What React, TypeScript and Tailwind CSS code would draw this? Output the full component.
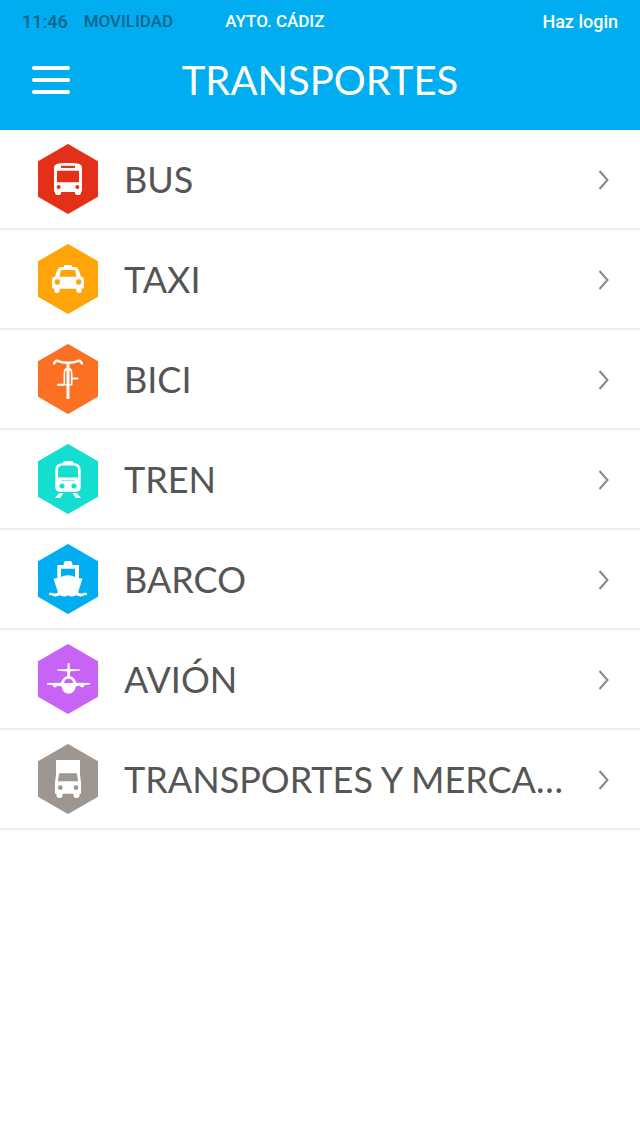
import type { ReactNode } from 'react'

type Transport = {
	label: string
	color: string
	icon: ReactNode
}

const transports: Transport[] = [
	{
		label: 'BUS',
		color: 'fill-[#e53019]',
		icon: (
			<>
				<path
					fillRule="evenodd"
					d="M16 24C16 20 19 19 30 19S44 20 44 24V46Q44 48 43 48V49Q43 51 40 51T37 49V48H23V49Q23 51 20 51T17 49V48Q16 48 16 46ZM23 21.700V24H37V21.700ZM19 26.700V38.300H41V26.700Z"
				/>
				<circle cx="20.7" cy="43" r="2" className="fill-[#e53019]" />
				<circle cx="39.3" cy="43" r="2" className="fill-[#e53019]" />
			</>
		),
	},
	{
		label: 'TAXI',
		color: 'fill-[#ffa50a]',
		icon: (
			<>
				<path
					fillRule="evenodd"
					d="M26 23V22Q26 21 27 21H33Q34 21 34 22V23H37Q39.5 23 40.5 25.5L43 32.5Q46 33 46 36.5V43Q46 44.7 43.7 44.7V47Q43.7 49 41 49T38.3 47V44.7H21.7V47Q21.7 49 19 49T16.3 47V44.7Q14 44.7 14 43V36.5Q14 33 17 32.5L19.5 25.5Q20.500 23 23 23ZM24 26Q23 26 22.7 27L21.5 32.7H38.5L37.3 27Q37 26 36 26Z"
				/>
				<circle cx="19.3" cy="38" r="2.7" className="fill-[#ffa50a]" />
				<circle cx="40.7" cy="38" r="2.7" className="fill-[#ffa50a]" />
			</>
		),
	},
	{
		label: 'BICI',
		color: 'fill-[#fc7023]',
		icon: (
			<g fill="none" stroke="white" strokeWidth="2" strokeLinecap="round">
				<path
					strokeWidth="2.5"
					d="M16 19.5C17 17 19 16 21.5 17.5C24 19 26 18.8 30 18.8S36 19 38.5 17.5C41 16 43 17 44 19.5"
				/>
				<path strokeWidth="3" strokeLinecap="butt" d="M30 18V55" />
				<path
					strokeWidth="1.6"
					d="M26.3 40.5V30C26.3 26 27.5 24.4 30 24.4S33.7 26 33.7 30V40.5M26.3 40.7H28M32 40.7H33.7"
				/>
				<path d="M20 40.7H26M34 34.5H39.5" />
			</g>
		),
	},
	{
		label: 'TREN',
		color: 'fill-[#14decf]',
		icon: (
			<>
				<path
					fillRule="evenodd"
					d="M25 19Q25 17 27 17H33.5Q35.5 17 35.5 19Q42.7 19.5 42.7 26V43Q42.7 47.7 38 47.7H22Q17.3 47.7 17.3 43V26Q17.3 19.5 25 19ZM25 21.5Q20 21.5 20 26V33.5H40V26Q40 21.5 35 21.5ZM23.500 36V36.600H36.500V36Z"
				/>
				<path d="M21.5 49H25.5L22 54H17L20.5 50ZM38.5 49H34.5L38 54H43L39.5 50Z" />
				<circle cx="24" cy="42" r="2.5" className="fill-[#14decf]" />
				<circle cx="36" cy="42" r="2.5" className="fill-[#14decf]" />
			</>
		),
	},
	{
		label: 'BARCO',
		color: 'fill-[#00adf0]',
		icon: (
			<>
				<path d="M25.7 21V19L27 17H33L34.3 19V21H41V34L44.5 34.7L40 48.5C42 49.5 44 49.7 45.5 49Q47.5 47.8 49 49.5V51.3Q47 50.5 45.5 51.7C43 53 40.5 52.5 38 51.3C35 53 32.5 53 30 51.3C27.5 53 25 53 22 51.3C19.5 52.5 17 53 14.5 51.7Q13 50.5 11 51.3V49.5Q12.5 47.8 14.5 49C16 49.7 18 49.5 20 48.5L15.5 34.7L19.3 34V21Z" />
				<path
					className="fill-[#00adf0]"
					d="M23 24.7H37V33L34 31.8Q30 30.500 26 31.800L23 33Z"
				/>
			</>
		),
	},
	{
		label: 'AVIÓN',
		color: 'fill-[#c864f5]',
		icon: (
			<path
				fillRule="evenodd"
				d="M29.5 20Q30.6 18 31.7 20V25L42 25.5V26.5L32 27.5V32.3Q37 33.5 38.2 38.8L52 39V40.5L46.3 41.2Q46 43.5 44.3 43.5T42 41.7L38 42.2Q36 49.7 30.6 49.7T23.3 42.2L19 41.7Q18.8 43.5 17 43.5T14.8 41.2L9 40.5V39L23.2 38.8Q24.3 33.5 29.3 32.3V27.5L19 26.5V25.5L29.5 25ZM26 39H35.3Q34.500 34.7 30.6 34.7T26 39Z"
			/>
		),
	},
	{
		label: 'TRANSPORTES Y MERCANCÍAS',
		color: 'fill-[#9e9690]',
		icon: (
			<>
				<path
					fillRule="evenodd"
					d="M18 16H42V31L43 38V49.7H41.5V51.5Q41.5 54 38.5 54T35.5 51.5V49.7H24.5V51.5Q24.5 54 21.5 54T18.5 51.5V49.7H17V38L18 31ZM21.3 29.3L19.7 37.3H40.3L38.7 29.3Z"
				/>
				<circle cx="22.3" cy="43.7" r="2.4" className="fill-[#9e9690]" />
				<circle cx="38" cy="43.7" r="2.4" className="fill-[#9e9690]" />
			</>
		),
	},
]

function TransportRow({ label, color, icon }: Transport) {
	return (
		<li className="border-b-2 border-[#eeeeee]">
			<a href="#" className="flex items-center pl-[38px] pr-[30px] py-3.5">
				<svg
					viewBox="0 0 60 70"
					className="w-[60px] h-[70px] shrink-0 fill-white"
					aria-hidden="true"
				>
					<path
						className={color}
						d="M29 0.4Q30 -0.2 31 0.4L60 17.3V52.7L31 69.6Q30 70.2 29 69.6L0 52.7V17.3Z"
					/>
					{icon}
				</svg>
				<span className="ml-[26px] mr-8 grow truncate text-4xl leading-[50px] text-[#555555]">
					{label}
				</span>
				<svg
					viewBox="0 0 12 24"
					className="w-3 h-6 shrink-0 fill-none stroke-[#888888] stroke-2"
					aria-hidden="true"
				>
					<path d="M1.500 4L9.500 13L1.500 22" />
				</svg>
			</a>
		</li>
	)
}

export default function App() {
	return (
		<main className="min-h-screen w-full bg-white font-['Lato',sans-serif]">
			<header className="bg-[#00adf0] pb-3.5 text-white">
				{/* Status line */}
				<div className="flex h-11 items-center px-[22px] font-['Roboto',sans-serif] text-[17px] font-medium">
					<span className="text-lg text-[#0a668a]">11:46</span>
					<span className="ml-4 text-[#0a668a]">MOVILIDAD</span>
					<span className="ml-[52px]">AYTO. CÁDIZ</span>
					<a href="#" className="ml-auto text-lg">
						Haz login
					</a>
				</div>

				{/* Title bar */}
				<div className="grid h-[72px] grid-cols-[1fr_auto_1fr] items-center px-8">
					<button
						type="button"
						aria-label="Menú"
						className="flex w-[38px] flex-col gap-2"
					>
						<span className="h-1 rounded-full bg-white" />
						<span className="h-1 rounded-full bg-white" />
						<span className="h-1 rounded-full bg-white" />
					</button>
					<h1 className="text-[40px] leading-none">TRANSPORTES</h1>
				</div>
			</header>

			<ul>
				{transports.map((transport) => (
					<TransportRow key={transport.label} {...transport} />
				))}
			</ul>
		</main>
	)
}
